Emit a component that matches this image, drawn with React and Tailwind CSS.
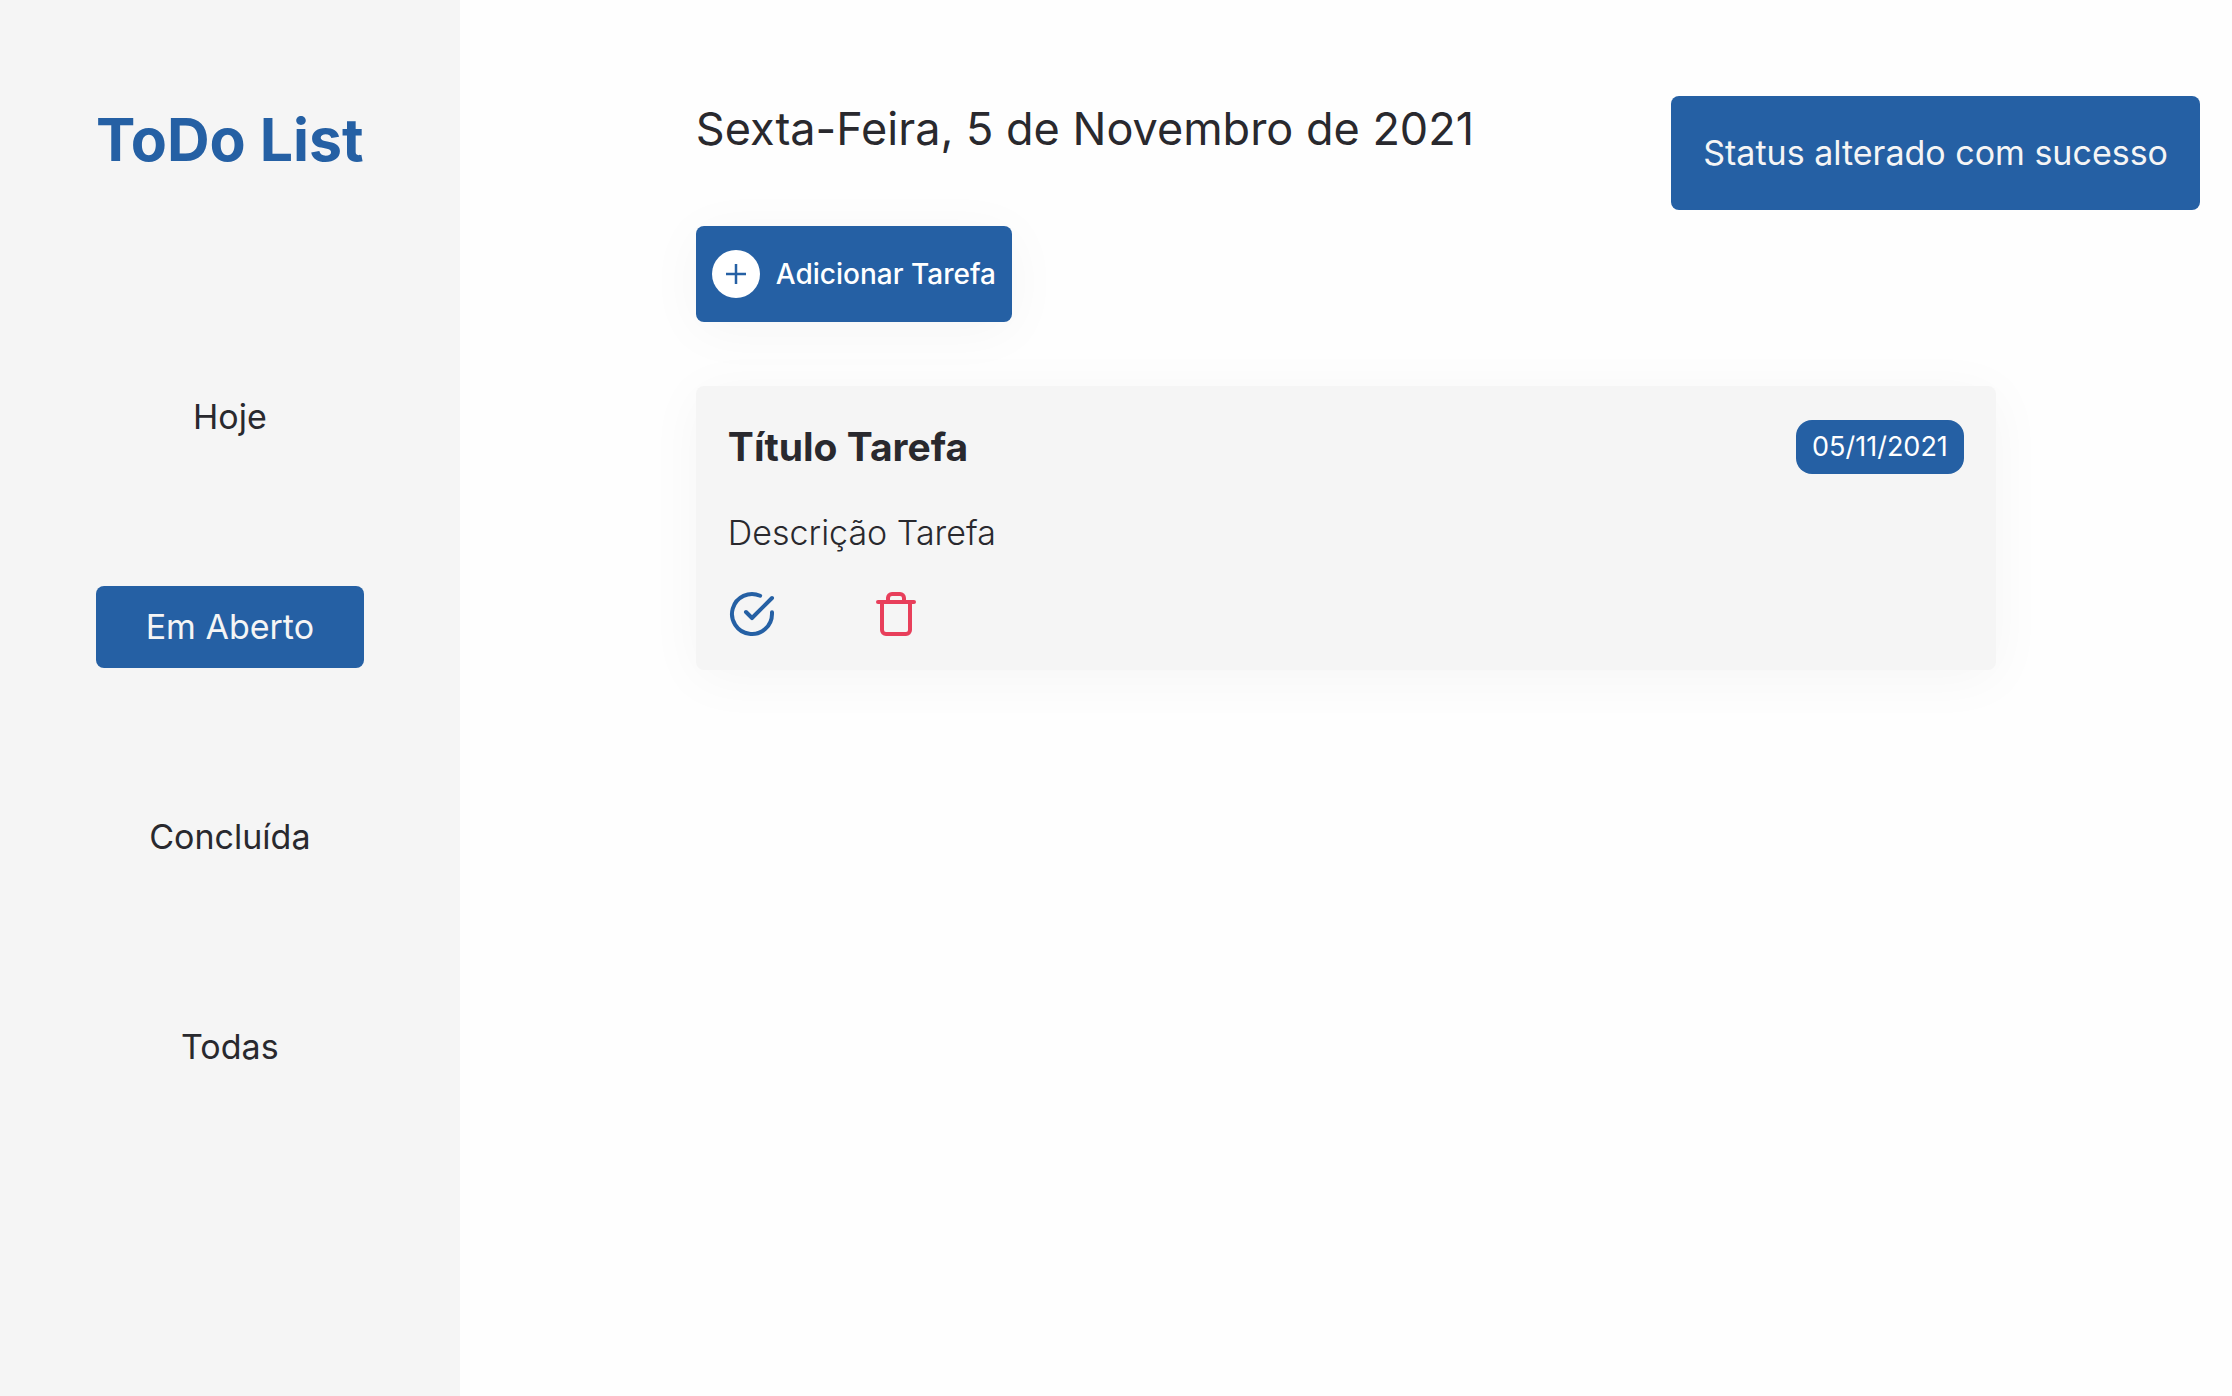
import React, { useState } from "react";

const FILTERS = ["Hoje", "Em Aberto", "Concluída", "Todas"];

const TASKS = [
  { id: 1, title: "Título Tarefa", description: "Descrição Tarefa", date: "05/11/2021" },
];

function Icon({ className, strokeWidth = 2, children }) {
  return (
    <svg
      className={className}
      viewBox="0 0 24 24"
      fill="none"
      stroke="currentColor"
      strokeWidth={strokeWidth}
      strokeLinecap="round"
      strokeLinejoin="round"
      aria-hidden="true"
    >
      {children}
    </svg>
  );
}

function Sidebar({ active, onSelect }) {
  return (
    <aside className="flex shrink-0 flex-col bg-[#f5f5f5] px-24 pt-24 pb-16">
      <h1 className="text-[59px] leading-[88px] font-bold whitespace-nowrap text-[#2560a4]">
        ToDo List
      </h1>
      <nav className="mt-48 flex flex-col gap-32">
        {FILTERS.map((name) => (
          <button
            key={name}
            type="button"
            onClick={() => onSelect(name)}
            className={
              name === active
                ? "rounded-lg bg-[#2560a4] py-4 text-[34px] leading-[50px] text-[#f5f5f5]"
                : "rounded-lg py-4 text-[34px] leading-[50px] text-[#29292e]"
            }
          >
            {name}
          </button>
        ))}
      </nav>
    </aside>
  );
}

function TaskCard({ task }) {
  return (
    <article className="flex flex-col gap-8 rounded-lg bg-[#f5f5f5] p-8 shadow-[0_8px_56px_rgba(0,0,0,0.04)]">
      <header className="flex items-center justify-between">
        <h2 className="text-[39px] leading-[58px] font-bold">{task.title}</h2>
        <time className="rounded-2xl bg-[#2560a4] px-4 text-[27px] leading-[54px] text-white">
          {task.date}
        </time>
      </header>
      <p className="text-[34px] leading-[50px] font-light">{task.description}</p>
      <div className="flex gap-24">
        <button type="button" aria-label="Concluir tarefa" className="text-[#2560a4]">
          <Icon className="size-12">
            <path d="M22 11.08V12a10 10 0 1 1-5.93-9.14" />
            <path d="M22 4 12 14.01l-3-3" />
          </Icon>
        </button>
        <button type="button" aria-label="Excluir tarefa" className="text-[#e83f5b]">
          <Icon className="size-12">
            <path d="M3 6h18" />
            <path d="M19 6v14a2 2 0 0 1-2 2H7a2 2 0 0 1-2-2V6m3 0V4a2 2 0 0 1 2-2h4a2 2 0 0 1 2 2v2" />
          </Icon>
        </button>
      </div>
    </article>
  );
}

export default function App() {
  const [active, setActive] = useState("Em Aberto");

  return (
    <div className="flex min-h-screen bg-[#fefefe] font-['Inter',sans-serif] text-[#29292e]">
      <Sidebar active={active} onSelect={setActive} />
      <main className="flex-1 px-8 pt-24">
        <div className="mx-auto flex max-w-[1300px] flex-col gap-16">
          <p className="text-[45px] leading-[66px]">
            Sexta-Feira, 5 de Novembro de 2021
          </p>
          <button
            type="button"
            className="flex h-24 items-center gap-4 self-start rounded-lg bg-[#2560a4] px-4 text-[28px] font-medium whitespace-nowrap text-white shadow-[0_8px_56px_rgba(0,0,0,0.04)]"
          >
            <span className="flex size-12 items-center justify-center rounded-full bg-white text-[#2560a4]">
              <Icon className="size-[30px]">
                <path strokeLinecap="butt" d="M12 4v16M4 12h16" />
              </Icon>
            </span>
            Adicionar Tarefa
          </button>
          {TASKS.map((task) => (
            <TaskCard key={task.id} task={task} />
          ))}
        </div>
      </main>
      <div
        role="status"
        className="fixed top-24 right-8 rounded-lg bg-[#2560a4] p-8 text-[34px] leading-[50px] text-[#f5f5f5]"
      >
        Status alterado com sucesso
      </div>
    </div>
  );
}
